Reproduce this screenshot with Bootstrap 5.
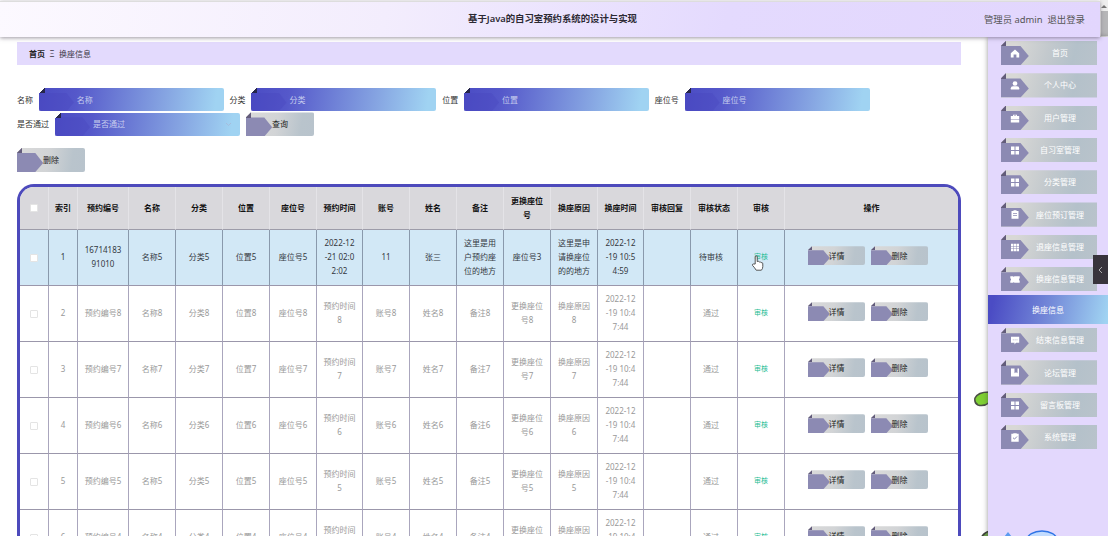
<!DOCTYPE html>
<html lang="zh-CN">
<head>
<meta charset="utf-8">
<meta name="viewport" content="width=device-width, initial-scale=1">
<title>基于Java的自习室预约系统的设计与实现</title>
<link href="https://cdn.jsdelivr.net/npm/bootstrap@5.3.0/dist/css/bootstrap.min.css" rel="stylesheet">
<style>
  body { font: 8px/14px "Noto Sans", "Noto Sans CJK SC", sans-serif; color: #333; background: #fff; height: 536px; overflow: hidden; }
  .topbar { height: 36px; margin-top: 1px; padding-right: 15px; width: 1100px; font-size: 9.4px; color: #555; z-index: 5;
    background: linear-gradient(100deg, #fcf9ff 0%, #f3edfd 35%, #e4dafe 66%, #e2d6fd 100%); box-shadow: 0 1px 4px rgba(60,50,70,.5); border-top: 1px solid #ddd; }
  .topbar .heading { font-size: 9.4px; font-weight: 600; color: #2c2933; left: 0; right: -5px; top: 10px; }
  .scroller { width: 8px; height: 37px; background: #eee; }
  .scroller i { width: 7px; height: 25px; background: #b6b6b8; margin-top: 11px; }
  .main { width: 988px; padding: 5px 27px 0 17px; height: 499px; overflow: hidden; }
  .crumbs { height: 23px; background: #e3dafd; padding-left: 12px; color: #3b3745; gap: 4.5px; }
  .crumbs b { color: #222; }
  .filters { margin-top: 23px; column-gap: 5.8px; row-gap: 1px; height: 48px; }
  .field { width: 185px; height: 23.4px; border-radius: 2px; padding-left: 38px; color: #c6cdee;
    background: linear-gradient(98deg, #4b4cc4 0%, #5558ca 20%, #86a5e2 68%, #a0d3f2 95%); }
  .field::before { content: ""; position: absolute; inset: 20% auto 0 0; width: 19%; background: rgba(72,70,190,.35); clip-path: polygon(0 0,78% 0,100% 53%,78% 100%,0 100%); }
  .field::after { content: ""; position: absolute; left: 0; top: 0; width: 6px; height: 5px; background: linear-gradient(135deg, #fff 46%, #26264a 50%); }
  .tagbtn { position: relative; isolation: isolate; clip-path: polygon(0 20%, 7% 0, 100% 0, 100% 100%, 0 100%);
    background: linear-gradient(98deg, #dadada 0%, #d2d4d6 45%, #b9c4cc 80%, #b8c3cc 100%); border: 0; border-radius: 2px; }
  .tagbtn::before { content: ""; position: absolute; z-index: -1; inset: 21% auto 0 0; width: 38.5%; background: #8c8ab3; clip-path: polygon(0 0,70% 0,100% 52%,70% 100%,0 100%); }
  .tagbtn::after { content: ""; position: absolute; left: 0; top: 0; width: 7%; height: 22%; background: #635c7b; }
  .btn-l { width: 68px; height: 24px; color: #222; }
  .btn-s { width: 57px; height: 19px; color: #222; }
  .grid-box { margin-top: 12px; height: 400px; border: 3px solid #4d4abc; border-bottom: 0; border-radius: 17px 17px 0 0; overflow: hidden; }
  .grid { table-layout: fixed; width: 938px; border-collapse: separate; border-spacing: 0; text-align: center; color: #999; }
  .grid th { height: 43px; padding: 0 6px 1px; background: #d9d8dc; color: #111; font-weight: 700; border-right: 1px solid #e4e3e7; border-bottom: 1px solid #9d9ca9; }
  .grid td { height: 56px; padding: 0 6px 1.5px; word-break: break-all; border-right: 1px solid #aaa6bd; border-bottom: 1px solid #9b97ab; }
  .grid td:nth-child(16) { padding-right: 12px; }
  .grid tr > :last-child { border-right: 0; }
  .grid .hot td { background: #d2e8f6; color: #34383f; border-right-color: #8999ac; }
  .grid a { color: #27bd95; font-size: 7px; text-decoration: none; }
  .tick { width: 8px; height: 8px; background: #fff; border: 1px solid #e4e4e4; border-radius: 1px; }
  .side { width: 120px; height: 499px; background: #e3d8fd; box-shadow: 0 0 5px rgba(60,60,60,.55); font-size: 8px; color: #fff; }
  .side .entry { flex: none; width: 96px; height: 24.3px; margin: 4px 0 4px 13px; padding-left: 22px; border-radius: 0;
    background: linear-gradient(105deg, #d8d8d6 15%, #c3c9cd 48%, #b4c1ca 75%, #b9c3cb 100%); clip-path: polygon(0 20%, 5% 0, 100% 0, 100% 100%, 0 100%); }
  .side .entry::before { width: 29%; }
  .side .entry::after { width: 5%; }
  .side .entry svg { position: absolute; left: 9px; top: 8px; width: 10px; height: 9px; fill: #fff; }
  .side .current { flex: none; height: 28.7px; background: linear-gradient(102deg, #4b4cc4 5%, #7388d8 50%, #a0d3f2 98%); }
  .drawer { right: 0; top: 255px; width: 15px; height: 29px; background: #38343c; z-index: 8; }
</style>
</head>
<body>
<svg class="d-none">
  <symbol id="home" viewBox="0 0 10 9"><path d="M5 .6 9.2 4.3V8.5H6.4V5.5H3.6v3H.8V4.3z"/></symbol>
  <symbol id="user" viewBox="0 0 10 9"><circle cx="5" cy="2.5" r="2.3"/><path d="M.8 8.6V7.2Q.8 5.4 3 5.2h4q2.200.2 2.200 2v1.400z"/></symbol>
  <symbol id="case" viewBox="0 0 10 9"><path d="M3 2V.7h4V2h2.200v3H.8V2zm.9 0h2.200v-.5H3.900zM.8 5.600h8.400v2.800H.8z"/></symbol>
  <symbol id="four" viewBox="0 0 10 9"><path d="M1 .5h3.500v3.500H1zm4.500 0H9v3.500H5.500zM1 5h3.500v3.500H1zm4.500 0H9v3.500H5.500z"/></symbol>
  <symbol id="clip" viewBox="0 0 10 9"><path fill-rule="evenodd" d="M1.500 1h2V.2h3V1h2v7.800h-7zM3 3.300v.7h4v-.7zm0 2v.7h4v-.7z"/></symbol>
  <symbol id="nine" viewBox="0 0 10 9"><path d="M1 .7h2.400v2.200H1zm2.900 0h2.300v2.200H3.900zm2.800 0H9v2.200H6.700zM1 3.400h2.400v2.200H1zm2.900 0h2.300v2.200H3.900zm2.800 0H9v2.200H6.700zM1 6.100h2.400v2.200H1zm2.900 0h2.300v2.200H3.900zm2.800 0H9v2.200H6.700z"/></symbol>
  <symbol id="ticket" viewBox="0 0 10 9"><path d="M.3 1.300h2.900l.6.800.6-.8h5.300v1.900q-1.500 1.200 0 2.500v2H4.400l-.6-.8-.6.800H.3v-2q1.500-1.300 0-2.500z"/></symbol>
  <symbol id="chat" viewBox="0 0 10 9"><path fill-rule="evenodd" d="M1 .8h8.200v6H6L4.500 8.500V6.800H1zm1.800 2.600v.8h.8v-.8zm1.900 0v.8h.8v-.8zm1.900 0v.8h.8v-.8z"/></symbol>
  <symbol id="book" viewBox="0 0 10 9"><path d="M1 .6h3.500v4.600l1.500-1 1.500 1V.6H9v8H1z"/></symbol>
  <symbol id="done" viewBox="0 0 10 9"><path d="M1.300.8h2V.2h3.400v.6h2v8H1.300z"/><path d="m3 4.700 1.500 1.400 2.500-2.600" fill="none" stroke="#8c8ab3"/></symbol>
</svg>

<header class="d-flex">
  <div class="topbar position-relative d-flex align-items-center justify-content-end gap-2">
    <div class="heading position-absolute text-center">基于Java的自习室预约系统的设计与实现</div>
    <span class="ms-auto">管理员 admin</span><span style="margin-left:-3px">退出登录</span>
  </div>
  <div class="scroller d-flex justify-content-center position-relative"><i></i>
    <svg class="position-absolute" style="top:4px" width="6" height="5"><path d="M0 4 3 1l3 3z" fill="#777"/></svg>
  </div>
</header>

<div class="d-flex position-relative">
  <main class="main">
    <nav class="crumbs d-flex align-items-center"><b>首页</b><span>Ξ</span><span>换座信息</span></nav>
    <form class="filters d-flex flex-wrap align-items-center align-content-start">
      <label>名称</label><div class="field position-relative d-flex align-items-center">名称</div>
      <label>分类</label><div class="field position-relative d-flex align-items-center">分类</div>
      <label>位置</label><div class="field position-relative d-flex align-items-center">位置</div>
      <label>座位号</label><div class="field position-relative d-flex align-items-center">座位号</div>
      <div class="w-100 d-flex align-items-center" style="column-gap:6px">
        <label>是否通过</label>
        <div class="field position-relative d-flex align-items-center">是否通过
          <svg class="ms-auto me-2" width="7" height="5"><path d="m1 1 2.500 2.500L6 1" fill="none" stroke="#a9b5d3" stroke-width=".7"/></svg>
        </div>
        <button type="button" class="tagbtn btn-l p-0">查询</button>
      </div>
    </form>
    <button type="button" class="tagbtn btn-l p-0 d-block" style="margin-top:12px">删除</button>
    <div class="grid-box">
      <table class="grid">
        <colgroup id="cols"></colgroup>
        <thead><tr id="head"></tr></thead>
        <tbody id="rows"></tbody>
      </table>
    </div>
  </main>

  <svg class="position-absolute" style="left:970px;top:351px" width="20" height="150">
    <path d="M19 4Q8 4 5 10q-1 5 3 7 6 2 12-3z" fill="#7fd035" stroke="#4a4f45" stroke-width="1.500"/>
    <path d="M11 150q3-6 9-7v7z" fill="#6a9a4a" stroke="#3c403a" stroke-width="1.500"/>
  </svg>

  <aside class="side position-relative d-flex flex-column" id="side"></aside>
  <svg class="position-absolute" style="left:1000px;top:490px" width="70" height="10">
    <path d="M4 10 8 5l4 5z" fill="#5b9bf0"/>
    <ellipse cx="42" cy="13" rx="15" ry="9" fill="#c3dcff" stroke="#2f74e6" stroke-width="1.500"/>
  </svg>
</div>

<div class="drawer position-absolute d-flex align-items-center justify-content-center">
  <svg width="5" height="8"><path d="M4 1 1 4l3 3" fill="none" stroke="#bbb" stroke-width=".9"/></svg>
</div>
<svg class="position-absolute" style="left:751px;top:255px" width="13" height="16" viewBox="0 0 13 16">
  <path d="M4.200 9V2q0-1.200 1-1.200T6.200 2v4.500q2-.6 2.300.5 1.500-.3 1.700.6 1.600-.2 1.600 1.200v2.700q0 2.300-1.400 3.700H5.200Q3.800 12.800 1.500 10.400q-.5-1.200.8-1.400z" fill="#fff" stroke="#444" stroke-width=".9"/>
</svg>

<script>
  const widths = [29,29,51,47,47,47,47,46,47,47,47,47,47,46,47,47,47,173];
  const heads = ['<span class="tick d-inline-block align-middle"></span>','索引','预约编号','名称','分类','位置','座位号','预约时间','账号','姓名','备注','更换座位号','换座原因','换座时间','审核回复','审核状态','审核','操作'];
  const tick = heads[0];
  const audit = '<a href="#">审核</a>';
  const ops = '<div class="d-flex justify-content-center" style="gap:6px;padding:0 7px 2px 0"><button class="tagbtn btn-s p-0">详情</button><button class="tagbtn btn-s p-0">删除</button></div>';
  const rows = [[tick,1,'1671418391010','名称5','分类5','位置5','座位号5','2022-12<br>-21 02:0<br>2:02','11','张三','这里是用户预约座位的地方','座位号3','这里是申请换座位的的地方','2022-12<br>-19 10:5<br>4:59','','待审核',audit,ops]];
  [8,7,6,5,4].forEach((n, i) => rows.push([tick, i + 2, ...['预约编号','名称','分类','位置','座位号','预约时间','账号','姓名','备注','更换座位号','换座原因'].map(t => t + n), '2022-12<br>-19 10:4<br>7:44', '', '通过', audit, ops]));
  cols.innerHTML = widths.map(w => `<col style="width:${w}px">`).join('');
  head.innerHTML = heads.map(h => `<th>${h}</th>`).join('');
  document.getElementById('rows').innerHTML = rows.map((r, i) => `<tr class="${i ? '' : 'hot'}">${r.map(c => `<td>${c}</td>`).join('')}</tr>`).join('');
  const menu = [['home','首页'],['user','个人中心'],['case','用户管理'],['four','自习室管理'],['four','分类管理'],['clip','座位预订管理'],['nine','退座信息管理'],['ticket','换座信息管理'],[null,'换座信息'],['chat','结束信息管理'],['book','论坛管理'],['four','留言板管理'],['done','系统管理']];
  side.innerHTML = menu.map(([ic, t]) => ic
    ? `<div class="entry tagbtn d-flex align-items-center justify-content-center"><svg><use href="#${ic}"/></svg>${t}</div>`
    : `<div class="current d-flex align-items-center justify-content-center">${t}</div>`).join('');
</script>
<script src="https://cdn.jsdelivr.net/npm/bootstrap@5.3.0/dist/js/bootstrap.bundle.min.js"></script>
</body>
</html>
